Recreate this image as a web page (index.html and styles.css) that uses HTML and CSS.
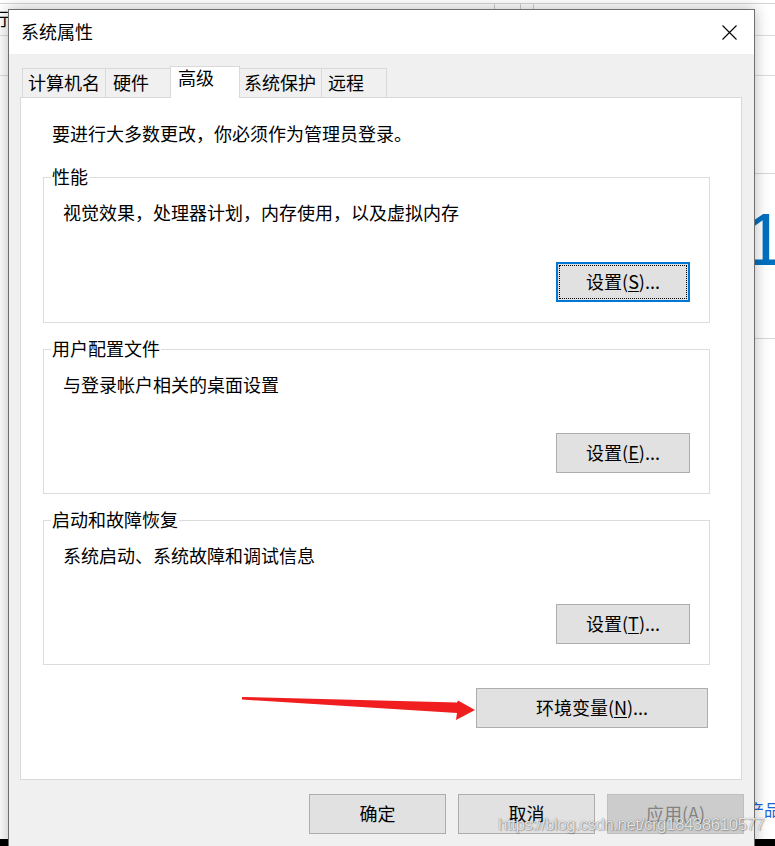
FILE: index.html
```html
<!DOCTYPE html>
<html lang="zh-CN">
<head>
<meta charset="utf-8">
<title>系统属性</title>
<link rel="stylesheet" href="styles.css">
</head>
<body>
<div class="desk">
  <span class="frag frag-hang">行</span>
  <span class="frag frag-one">1</span>
  <span class="frag frag-prod">产品</span>

  <div class="dialog">
    <div class="titlebar">
      <span class="title">系统属性</span>
      <svg class="close" width="15" height="15" viewBox="0 0 15 15"><path d="M0.5 0.5L14.5 14.5M14.5 0.5L0.5 14.5" stroke="#000" stroke-width="1.1" fill="none"/></svg>
    </div>
    <div class="body">
      <div class="tabs">
        <div class="tab t-name">计算机名</div>
        <div class="tab t-hw">硬件</div>
        <div class="tab t-adv active">高级</div>
        <div class="tab t-prot">系统保护</div>
        <div class="tab t-remote">远程</div>
      </div>
      <div class="panel">
        <p class="notice">要进行大多数更改，你必须作为管理员登录。</p>
        <div class="group g-first">
          <span class="legend">性能</span>
          <p class="desc">视觉效果，处理器计划，内存使用，以及虚拟内存</p>
          <button class="btn set focus">设置(<u>S</u>)...</button>
        </div>
        <div class="group">
          <span class="legend">用户配置文件</span>
          <p class="desc">与登录帐户相关的桌面设置</p>
          <button class="btn set">设置(<u>E</u>)...</button>
        </div>
        <div class="group">
          <span class="legend">启动和故障恢复</span>
          <p class="desc">系统启动、系统故障和调试信息</p>
          <button class="btn set">设置(<u>T</u>)...</button>
        </div>
        <div class="env-row">
          <button class="btn env">环境变量(<u>N</u>)...</button>
        </div>
      </div>
      <div class="footer">
        <button class="btn wide">确定</button>
        <button class="btn wide">取消</button>
        <button class="btn wide disabled">应用(A)</button>
      </div>
    </div>
  </div>

  <svg class="arrow" width="240" height="30" viewBox="0 0 240 30">
    <polygon points="2,2 217,7.5 218,5.5 235,15 216,25 217,18 2,4.5" fill="#f01e1e"/>
  </svg>
  <div class="watermark">https://blog.csdn.net/crg18438610577</div>
</div>
</body>
</html>
```

FILE: styles.css
```css
* { box-sizing: border-box; }

html, body {
  margin: 0;
  padding: 0;
}

body {
  width: 775px;
  height: 846px;
  overflow: hidden;
  background: #fff;
  font-family: "Noto Sans CJK SC", "Noto Sans", sans-serif;
  color: #000;
}

.desk {
  position: relative;
  width: 775px;
  height: 846px;
  overflow: hidden;
  background-color: #fff;
  background-image:
    linear-gradient(#d4d4d4, #d4d4d4),
    linear-gradient(#dcdcdc, #dcdcdc),
    linear-gradient(#dcdcdc, #dcdcdc),
    linear-gradient(#d6d6d6, #d6d6d6),
    linear-gradient(#d6d6d6, #d6d6d6),
    linear-gradient(#cfcfcf, #cfcfcf),
    linear-gradient(#cfcfcf, #cfcfcf),
    linear-gradient(#cfcfcf, #cfcfcf),
    linear-gradient(#000, #000);
  background-repeat: no-repeat;
  background-size:
    100% 1px,
    100% 1px,
    100% 1px,
    40px 1px,
    40px 1px,
    1px 9px,
    1px 9px,
    1px 9px,
    100% 8px;
  background-position:
    0 3px,
    0 35px,
    0 75px,
    right 0 top 173px,
    right 0 top 338px,
    494px 3px,
    520px 3px,
    533px 3px,
    0 839px;
}

.frag {
  position: absolute;
  white-space: nowrap;
}

.frag-hang {
  left: -9px;
  top: 6px;
  font-size: 18px;
  line-height: 24px;
}

.frag-one {
  left: 744px;
  top: 203px;
  font-family: "Liberation Sans", sans-serif;
  font-size: 74px;
  line-height: 74px;
  color: #0070c0;
}

.frag-prod {
  left: 748px;
  top: 798px;
  font-size: 16px;
  line-height: 22px;
  color: #1a66d6;
}

/* dialog window */
.dialog {
  position: absolute;
  left: 8px;
  top: 9px;
  width: 747px;
  height: 850px;
  border: 1px solid #6f6f6f;
  background: #f0f0f0;
  box-shadow: 0 0 14px rgba(0, 0, 0, 0.28);
  display: flex;
  flex-direction: column;
}

.titlebar {
  height: 44px;
  background: #fff;
  display: flex;
  align-items: center;
  justify-content: space-between;
  padding: 0 17px 0 12px;
  flex: none;
}

.title {
  font-size: 18px;
  line-height: 20px;
  padding-bottom: 3px;
}

.close {
  display: block;
}

.body {
  padding: 12px 12px 0 11px;
  display: flex;
  flex-direction: column;
}

/* tabs */
.tabs {
  display: flex;
  align-items: flex-end;
  margin-left: 2px;
  height: 31px;
}

.tab {
  height: 29px;
  border: 1px solid #d9d9d9;
  border-bottom: none;
  background: #f0f0f0;
  font-size: 18px;
  line-height: 20px;
  padding: 3px 0 0 5px;
  margin-left: -1px;
  white-space: nowrap;
}

.tab:first-child { margin-left: 0; }

.t-name { width: 84px; }
.t-hw { width: 66px; padding-left: 7px; }
.t-adv { width: 70px; }
.t-prot { width: 83px; padding-left: 4px; }
.t-remote { width: 66px; padding-left: 6px; }

.tab.active {
  position: relative;
  z-index: 1;
  height: 32px;
  margin-bottom: -1px;
  background: #fff;
  padding: 0 0 0 7px;
}

/* tab page */
.panel {
  height: 683px;
  border: 1px solid #d9d9d9;
  background: #fff;
  padding: 23px 31px 0 22px;
  display: flex;
  flex-direction: column;
}

.notice {
  margin: 0 0 0 9px;
  font-size: 18px;
  line-height: 24px;
}

.group {
  margin-top: 26px;
  height: 145px;
  border: 1px solid #dcdcdc;
  display: flex;
  flex-direction: column;
  padding: 0 19px 20px 19px;
}

.group.g-first {
  margin-top: 32px;
  height: 146px;
}

.legend {
  align-self: flex-start;
  margin: -14px 0 0 -12px;
  padding: 0 1px;
  background: #fff;
  font-size: 18px;
  line-height: 24px;
}

.desc {
  margin: 12px 0 0 0;
  font-size: 18px;
  line-height: 24px;
}

/* buttons */
.btn {
  font-family: inherit;
  font-size: 18px;
  line-height: 24px;
  color: #000;
  background: #e1e1e1;
  border: 1px solid #adadad;
  height: 40px;
  padding: 0 0 2px 0;
  display: flex;
  align-items: center;
  justify-content: center;
  white-space: nowrap;
}

.btn u {
  text-underline-offset: 2px;
}

.btn.set {
  width: 134px;
  margin-top: auto;
  align-self: flex-end;
}

.btn.focus {
  border: 2px solid #0078d7;
  outline: 1px dotted #000;
  outline-offset: -4px;
}

.env-row {
  display: flex;
  justify-content: flex-end;
  margin: 23px 2px 0 0;
}

.btn.env {
  width: 232px;
}

.footer {
  display: flex;
  justify-content: flex-end;
  gap: 12px;
  margin: 14px -2px 0 0;
}

.btn.wide {
  width: 137px;
}

.btn.disabled {
  background: #cccccc;
  border-color: #bfbfbf;
  color: #838383;
}

/* annotations over the screenshot */
.arrow {
  position: absolute;
  left: 240px;
  top: 695px;
  display: block;
}

.watermark {
  position: absolute;
  left: 498px;
  top: 815px;
  font-family: "Liberation Sans", Arial, sans-serif;
  font-size: 17px;
  line-height: 20px;
  letter-spacing: -0.5px;
  white-space: nowrap;
  color: rgba(255, 255, 255, 0.82);
  text-shadow: 0 0 1px rgba(0, 0, 0, 0.55), 1px 1px 1px rgba(0, 0, 0, 0.2);
}
```
